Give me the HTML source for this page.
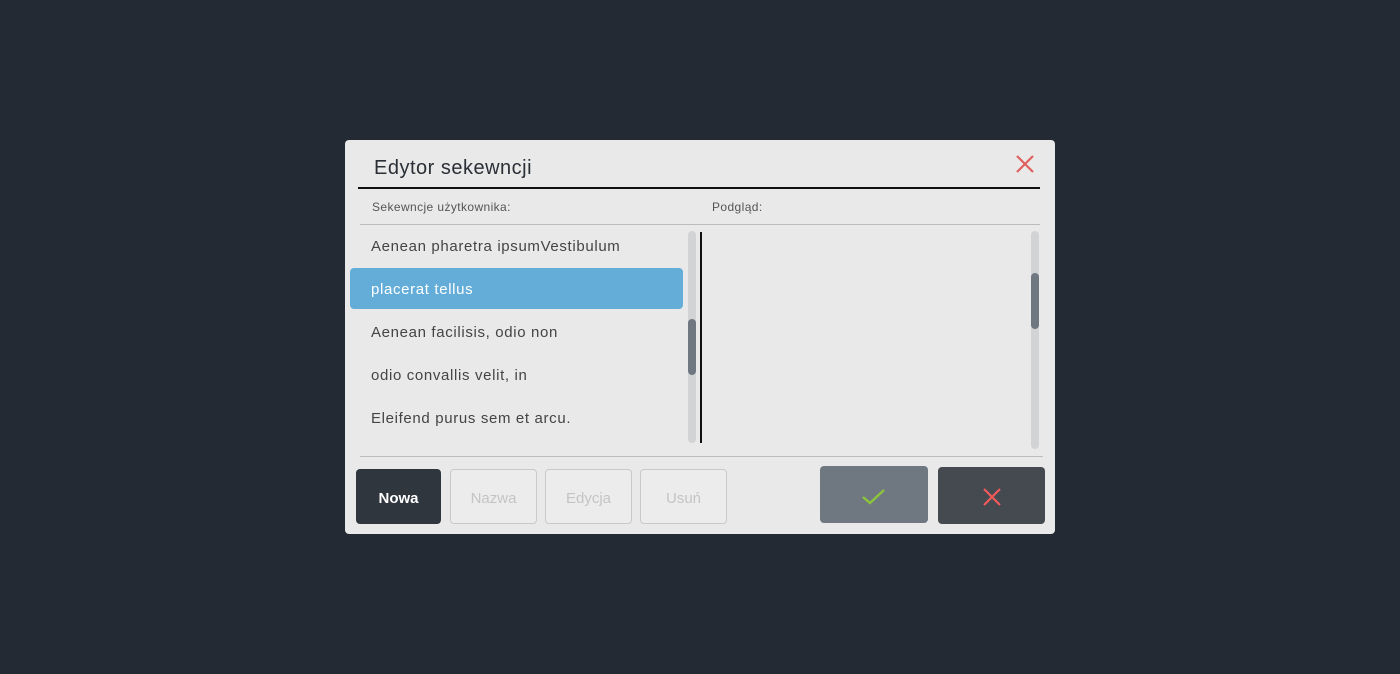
<!DOCTYPE html>
<html><head><meta charset="utf-8"><style>
*{margin:0;padding:0;box-sizing:border-box}
body{width:1400px;height:674px;background:#232a34;position:relative;overflow:hidden;font-family:"Liberation Sans",sans-serif}
.a{position:absolute}
.dlg{left:345px;top:140px;width:710px;height:394px;background:#e9e9e9;border-radius:4px}
.it{position:absolute;left:371px;font-size:15px;color:#444;letter-spacing:0.65px;line-height:18px}
.btn{position:absolute;top:469px;height:55px;border-radius:4px;font-size:15px;display:flex;align-items:center;justify-content:center;padding-top:3px}
.dis{border:1px solid #c9c9c9;color:#c4c4c4;background:#ececec}
</style></head><body>
<div class="a dlg"></div>
<div class="a" style="left:374px;top:157px;font-size:20px;color:#2a2f36;letter-spacing:0.5px">Edytor sekewncji</div>
<svg class="a" style="left:1015px;top:154px" width="20" height="20" viewBox="0 0 20 20"><path d="M2 2L18 18M18 2L2 18" stroke="#e06060" stroke-width="2.2"/></svg>
<div class="a" style="left:358px;top:187px;width:682px;height:1.5px;background:#111"></div>
<div class="a" style="left:372px;top:200px;font-size:12px;color:#555;letter-spacing:0.4px">Sekewncje użytkownika:</div>
<div class="a" style="left:712px;top:200px;font-size:12px;color:#555;letter-spacing:0.4px">Podgląd:</div>
<div class="a" style="left:360px;top:224px;width:680px;height:1px;background:#bcbcbc"></div>
<div class="a" style="left:350px;top:268px;width:333px;height:41px;background:#64add8;border-radius:4px"></div>
<div class="it" style="top:238px">Aenean pharetra ipsumVestibulum</div>
<div class="it" style="top:281px;color:#fff">placerat tellus</div>
<div class="it" style="top:324px">Aenean facilisis, odio non</div>
<div class="it" style="top:367px">odio convallis velit, in</div>
<div class="it" style="top:410px">Eleifend purus sem et arcu.</div>
<div class="a" style="left:688px;top:231px;width:8px;height:212px;background:#d2d3d5;border-radius:4px"></div>
<div class="a" style="left:688px;top:319px;width:8px;height:56px;background:#6f7780;border-radius:4px"></div>
<div class="a" style="left:700px;top:232px;width:1.5px;height:211px;background:#111"></div>
<div class="a" style="left:1031px;top:231px;width:8px;height:218px;background:#d2d3d5;border-radius:4px"></div>
<div class="a" style="left:1031px;top:273px;width:8px;height:56px;background:#6f7780;border-radius:4px"></div>
<div class="a" style="left:360px;top:456px;width:683px;height:1px;background:#bcbcbc"></div>
<div class="btn" style="left:356px;width:85px;background:#2f363e;color:#fff;font-weight:bold">Nowa</div>
<div class="btn dis" style="left:450px;width:87px">Nazwa</div>
<div class="btn dis" style="left:545px;width:87px">Edycja</div>
<div class="btn dis" style="left:640px;width:87px">Usuń</div>
<div class="btn" style="left:820px;top:466px;width:108px;height:57px;background:#6f7780">
<svg width="26" height="20" viewBox="0 0 26 20"><path d="M2 11L9 17L23 4" stroke="#8cc43c" stroke-width="2.4" fill="none"/></svg></div>
<div class="btn" style="left:938px;top:467px;width:107px;height:57px;background:#454a51">
<svg width="20" height="20" viewBox="0 0 20 20"><path d="M2 2L18 18M18 2L2 18" stroke="#f05a5a" stroke-width="2.2"/></svg></div>
</body></html>
